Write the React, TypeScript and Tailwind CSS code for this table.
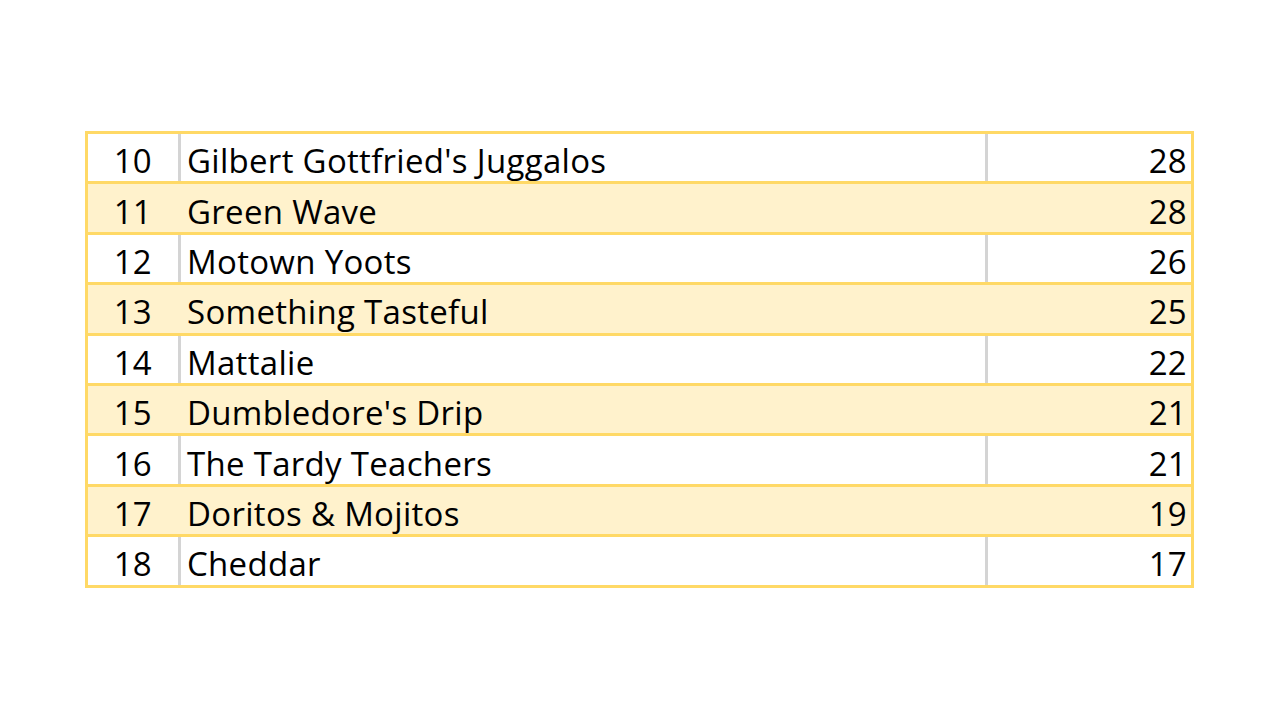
const rows = [
  { rank: 10, team: "Gilbert Gottfried's Juggalos", score: 28 },
  { rank: 11, team: 'Green Wave', score: 28 },
  { rank: 12, team: 'Motown Yoots', score: 26 },
  { rank: 13, team: 'Something Tasteful', score: 25 },
  { rank: 14, team: 'Mattalie', score: 22 },
  { rank: 15, team: "Dumbledore's Drip", score: 21 },
  { rank: 16, team: 'The Tardy Teachers', score: 21 },
  { rank: 17, team: 'Doritos & Mojitos', score: 19 },
  { rank: 18, team: 'Cheddar', score: 17 },
]

export default function App() {
  return (
    <div
      className="w-[1280px] h-[720px] bg-white pt-[131px] pl-[85px] text-black"
      style={{ fontFamily: '"Open Sans", "Noto Sans", sans-serif' }}
    >
      <div className="w-[1109px] border-[3px] border-[#ffd966] flex flex-col">
        {rows.map((r, i) => {
          const band = i % 2 === 1
          const last = i === rows.length - 1
          return (
            <div
              key={r.rank}
              className={`flex items-center text-[33px] tracking-[0.3px] leading-none ${
                last ? 'h-[47.4px]' : 'h-[50.4px] border-b-[3px] border-[#ffd966]'
              } ${band ? 'bg-[#fff2cc]' : 'bg-white'}`}
            >
              <div className="w-[90px] h-full flex items-center justify-end pr-[26px] pt-[6px]">{r.rank}</div>
              <div
                className={`w-[807px] h-full flex items-center pl-[6px] pt-[6px] border-l-[3px] ${
                  band ? 'border-[#fff2cc]' : 'border-[#d4d4d4]'
                }`}
              >
                {r.team}
              </div>
              <div
                className={`flex-1 h-full flex items-center justify-end pr-[4px] pt-[6px] border-l-[3px] ${
                  band ? 'border-[#fff2cc]' : 'border-[#d4d4d4]'
                }`}
              >
                {r.score}
              </div>
            </div>
          )
        })}
      </div>
    </div>
  )
}
